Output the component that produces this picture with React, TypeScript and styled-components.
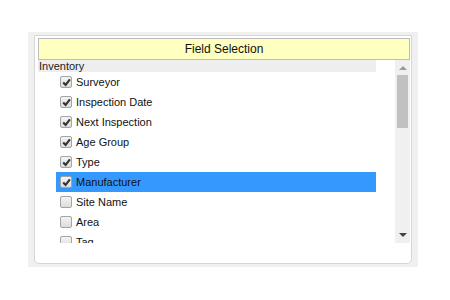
import React from "react";
import styled, { createGlobalStyle } from "styled-components";

const GlobalStyle = createGlobalStyle`
  html, body {
    margin: 0;
    padding: 0;
    background: #ffffff;
    font-family: "Liberation Sans", Arial, sans-serif;
  }
`;

const Page = styled.div`
  width: 450px;
  height: 300px;
  padding: 32px 0 0 28px;
  box-sizing: border-box;
`;

const Frame = styled.div`
  width: 390px;
  height: 235px;
  background: #f0f0f0;
  padding: 3px 6px 3px 6px;
  box-sizing: border-box;
`;

const Panel = styled.div`
  height: 100%;
  background: #ffffff;
  border: 1px solid #d6d6d6;
  border-radius: 0 0 5px 5px;
  padding: 2px 1px 0 3px;
  box-sizing: border-box;
  display: flex;
  flex-direction: column;
`;

const Header = styled.div`
  height: 22px;
  background: #ffffc0;
  border: 1px solid #bcbcbc;
  box-sizing: border-box;
  display: flex;
  align-items: center;
  justify-content: center;
  font-size: 12px;
  color: #111;
`;

const Body = styled.div`
  display: flex;
  height: 183px;
  overflow: hidden;
`;

const List = styled.div`
  width: 338px;
  flex: none;
`;

const Group = styled.div`
  height: 12px;
  line-height: 12px;
  background: #eeeeee;
  padding-left: 1px;
  font-size: 11px;
  color: #222;
`;

const Row = styled.div<{ $selected?: boolean }>`
  height: 20px;
  margin-left: 18px;
  padding-left: 4px;
  display: flex;
  align-items: center;
  gap: 4px;
  font-size: 11px;
  color: #111;
  background: ${(p) => (p.$selected ? "#3399ff" : "transparent")};
`;

const Box = styled.span`
  width: 12px;
  height: 12px;
  box-sizing: border-box;
  border: 1px solid #a4a4a4;
  border-radius: 2px;
  background: linear-gradient(#f4f4f4, #dcdcdc);
  display: flex;
  align-items: center;
  justify-content: center;
  flex: none;
`;

const Scrollbar = styled.div`
  margin-left: auto;
  width: 15px;
  background: #f0f0f0;
  display: flex;
  flex-direction: column;
  align-items: center;
  padding: 6px 0;
  box-sizing: border-box;
`;

const Arrow = styled.div<{ $down?: boolean; $color: string }>`
  width: 0;
  height: 0;
  border-left: 4px solid transparent;
  border-right: 4px solid transparent;
  ${(p) =>
    p.$down
      ? `border-top: 4px solid ${p.$color}; margin-top: auto;`
      : `border-bottom: 4px solid ${p.$color};`}
`;

const Thumb = styled.div`
  width: 11px;
  height: 53px;
  background: #c1c1c1;
  margin-top: 5px;
`;

const Check = () => (
  <svg width="9" height="9" viewBox="0 0 9 9">
    <path d="M1.2 4.5 L3.6 7 L7.9 1.3" fill="none" stroke="#333" strokeWidth="2.1" />
  </svg>
);

const fields = [
  { name: "Surveyor", checked: true },
  { name: "Inspection Date", checked: true },
  { name: "Next Inspection", checked: true },
  { name: "Age Group", checked: true },
  { name: "Type", checked: true },
  { name: "Manufacturer", checked: true, selected: true },
  { name: "Site Name", checked: false },
  { name: "Area", checked: false },
  { name: "Tag", checked: false },
];

const App = () => {
  return (
    <Page>
      <GlobalStyle />
      <Frame>
        <Panel>
          <Header>Field Selection</Header>
          <Body>
            <List>
              <Group>Inventory</Group>
              {fields.map((f) => (
                <Row key={f.name} $selected={f.selected}>
                  <Box>{f.checked && <Check />}</Box>
                  <span>{f.name}</span>
                </Row>
              ))}
            </List>
            <Scrollbar>
              <Arrow $color="#999" />
              <Thumb />
              <Arrow $down $color="#444" />
            </Scrollbar>
          </Body>
        </Panel>
      </Frame>
    </Page>
  );
};

export default App;
